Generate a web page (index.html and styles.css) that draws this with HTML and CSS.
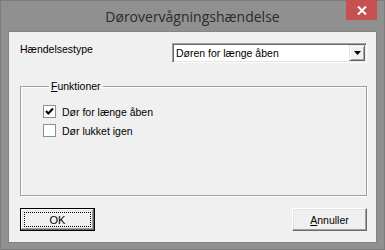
FILE: index.html
```html
<!DOCTYPE html>
<html lang="da">
<head>
    <meta charset="UTF-8">
    <title>Dørovervågningshændelse</title>
    <link rel="stylesheet" href="styles.css">
</head>
<body>
    <div class="window">
        <div class="titlebar">
            <span></span>
            <span class="title">Dørovervågningshændelse</span>
            <span class="close">
                <svg width="10" height="9" viewBox="0 0 10 9">
                    <path d="M1 0.5 L9 8.5 M9 0.5 L1 8.5" stroke="#fff" stroke-width="2" fill="none"/>
                </svg>
            </span>
        </div>

        <div class="client">
            <div class="field-row">
                <span class="field-label">Hændelsestype</span>
                <div class="combo">
                    <span class="combo-text">Døren for længe åben</span>
                    <span class="combo-btn">
                        <svg width="7" height="4" viewBox="0 0 7 4"><path d="M0 0 H7 L3.5 4 Z" fill="#000"/></svg>
                    </span>
                </div>
            </div>

            <fieldset class="group">
                <legend><u>F</u>unktioner</legend>
                <label class="check">
                    <span class="box">
                        <svg width="11" height="11" viewBox="0 0 11 11"><path d="M2 5 L4.3 7.5 L9 2.5" stroke="#000" stroke-width="2" fill="none"/></svg>
                    </span>
                    Dør for længe åben
                </label>
                <label class="check">
                    <span class="box"></span>
                    Dør lukket igen
                </label>
            </fieldset>

            <div class="buttons">
                <button class="btn default"><span class="focus">OK</span></button>
                <button class="btn"><span><u>A</u>nnuller</span></button>
            </div>
        </div>
    </div>
</body>
</html>
```

FILE: styles.css
```css
body {
    margin: 0;
    background-color: #909090;
}
.window {
    width: 385px;
    height: 250px;
    box-sizing: border-box;
    display: flex;
    flex-direction: column;
    background-color: #909090;
    border: 1px solid #7c7c7c;
}
.titlebar {
    height: 30px;
    display: grid;
    grid-template-columns: 1fr auto 1fr;
    padding: 0 7px;
}
.title {
    font-family: "Open Sans", "Noto Sans", sans-serif;
    font-size: 14px;
    line-height: 30px;
    color: #2b2b2b;
    padding-top: 1px;
}
.close {
    justify-self: end;
    width: 31px;
    height: 20px;
    margin-top: -1px;
    background-color: #c75050;
    display: flex;
    align-items: center;
    justify-content: center;
}
.client {
    flex: 1;
    margin: 0 7px 6px 7px;
    padding: 11px 9px 11px 11px;
    background-color: #f0f0f0;
    border: 1px solid #848484;
    display: flex;
    flex-direction: column;
    font-family: "Liberation Sans", Arial, sans-serif;
    font-size: 10.5px;
    color: #000;
}
.field-row {
    display: flex;
    justify-content: space-between;
    align-items: flex-start;
}
.field-label {
    line-height: 13px;
}
.combo {
    width: 195px;
    height: 20px;
    box-sizing: border-box;
    display: flex;
    align-items: center;
    background-color: #fff;
    border: 1px solid;
    border-color: #a0a0a0 #fff #fff #a0a0a0;
    box-shadow: inset 1px 1px 0 #696969, inset -1px -1px 0 #e3e3e3;
}
.combo-text {
    flex: 1;
    padding-left: 3px;
    line-height: 13px;
}
.combo-btn {
    width: 16px;
    height: 16px;
    margin-right: 1px;
    box-sizing: border-box;
    display: flex;
    align-items: center;
    justify-content: center;
    background-color: #f0f0f0;
    border: 1px solid;
    border-color: #e3e3e3 #696969 #696969 #e3e3e3;
    box-shadow: inset 1px 1px 0 #fff, inset -1px -1px 0 #a0a0a0;
}
.group {
    flex: 1;
    margin: 17px 0 0 0;
    padding: 9px 0 0 22px;
    border: 1px solid #a0a0a0;
    box-shadow: inset 1px 1px 0 #fff, 1px 1px 0 #fff;
    min-width: 0;
}
.group legend {
    margin-left: 6px;
    padding: 0 2px;
    line-height: 13px;
    background-color: #f0f0f0;
}
.check {
    display: flex;
    align-items: center;
    height: 19px;
    gap: 6px;
}
.box {
    width: 13px;
    height: 13px;
    box-sizing: border-box;
    border: 1px solid #8f8f8f;
    background-color: #fff;
    display: flex;
}
.buttons {
    display: flex;
    justify-content: space-between;
    margin-top: 12px;
}
.btn {
    width: 75px;
    height: 23px;
    padding: 0;
    font: inherit;
    color: #000;
    background-color: #f0f0f0;
    border: 1px solid;
    border-color: #fff #696969 #696969 #fff;
    box-shadow: inset -1px -1px 0 #a0a0a0, inset 1px 1px 0 #e3e3e3;
    display: flex;
    align-items: center;
    justify-content: center;
}
.btn.default {
    border-color: #000;
    box-shadow: inset -1px -1px 0 #696969, inset 1px 1px 0 #fff, inset -2px -2px 0 #a0a0a0, inset 2px 2px 0 #e3e3e3;
}
.focus {
    width: 67px;
    height: 15px;
    box-sizing: border-box;
    border: 1px dotted #000;
    display: flex;
    align-items: center;
    justify-content: center;
    font-size: 11px;
}
```
